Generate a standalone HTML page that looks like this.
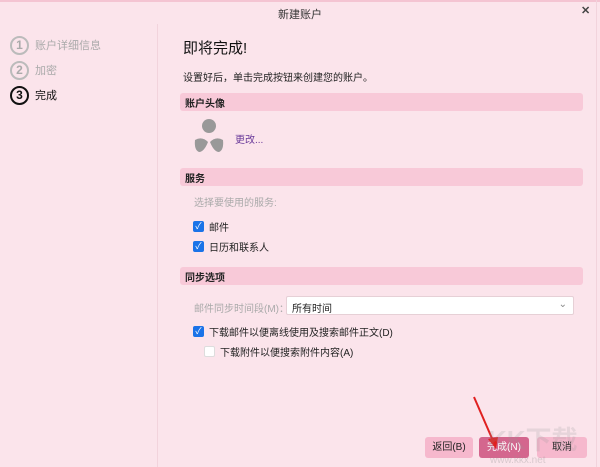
<!DOCTYPE html>
<html><head><meta charset="utf-8"><style>
*{margin:0;padding:0;box-sizing:border-box}
body{width:600px;height:467px;overflow:hidden;background:#fbe4eb;font-family:"Liberation Sans","Noto Sans CJK SC",sans-serif;font-size:10px;color:#222;position:relative}
.a{position:absolute}
.title{top:6px;left:0;width:600px;text-align:center;font-size:11px;color:#333}
.close{top:4px;left:581px;font-size:11px;color:#444;font-weight:bold}
.topline{top:0;left:0;width:600px;height:2px;background:#f4c4d2}
.divider{top:24px;left:157px;width:1px;height:443px;background:#f2d3dc}
.rdiv{top:0;left:596px;width:1px;height:467px;background:#f2d3dc}
.step{left:10px;height:20px;display:flex;align-items:center;font-size:11px;color:#aaa}
.step .c{width:19px;height:19px;border:2px solid #bbb;border-radius:50%;display:flex;align-items:center;justify-content:center;font-size:12px;font-weight:bold;color:#aaa;margin-right:6px}
.step.on{color:#111}.step.on .c{border-color:#111;color:#111}
.hdr{left:180px;width:403px;height:18px;background:#f8c9d8;border-radius:3px;font-weight:bold;font-size:10px;padding:2px 5px}
.cb{width:11px;height:11px;border-radius:2px;background:#1a73e8;color:#fff;font-size:9px;line-height:11px;text-align:center}
.row{display:flex;align-items:center;gap:5px;font-size:10px}
.btn{top:437px;height:21px;width:48px;border-radius:3px;background:#f6b8cd;font-size:10px;text-align:center;line-height:21px;color:#222}
</style></head><body>
<div class="a topline"></div>
<div class="a title">新建账户</div>
<div class="a close">✕</div>
<div class="a divider"></div>
<div class="a rdiv"></div>
<div class="a step" style="top:35px"><div class="c">1</div>账户详细信息</div>
<div class="a step" style="top:60px"><div class="c">2</div>加密</div>
<div class="a step on" style="top:85px"><div class="c">3</div>完成</div>
<div class="a" style="top:37px;left:183px;font-size:15px;color:#111">即将完成!</div>
<div class="a" style="top:69px;left:183px;font-size:10px">设置好后，单击完成按钮来创建您的账户。</div>
<div class="a hdr" style="top:93px">账户头像</div>
<svg class="a" style="top:118px;left:192px" width="36" height="36"><circle cx="17" cy="8" r="7" fill="#999"/><path d="M3 22 Q10 18 16 24 Q12 34 7 34 Q2 32 3 22Z" fill="#999"/><path d="M31 22 Q24 18 18 24 Q22 34 27 34 Q32 32 31 22Z" fill="#999"/></svg>
<div class="a" style="top:131px;left:235px;color:#6a3a9a;font-size:10px">更改...</div>
<div class="a hdr" style="top:168px">服务</div>
<div class="a" style="top:194px;left:194px;color:#aaa">选择要使用的服务:</div>
<div class="a row" style="top:219px;left:193px"><div class="cb">✓</div>邮件</div>
<div class="a row" style="top:239px;left:193px"><div class="cb">✓</div>日历和联系人</div>
<div class="a hdr" style="top:267px">同步选项</div>
<div class="a" style="top:300px;left:194px;color:#aaa">邮件同步时间段(M)：:</div>
<div class="a" style="top:296px;left:286px;width:288px;height:19px;background:#fff;border:1px solid #e6d0d6;border-radius:2px;padding:3px 5px;font-size:10px">所有时间<span style="position:absolute;right:6px;top:2px;color:#888">⌄</span></div>
<div class="a row" style="top:324px;left:193px"><div class="cb">✓</div>下载邮件以便离线使用及搜索邮件正文(D)</div>
<div class="a row" style="top:344px;left:204px"><div class="cb" style="background:#fff;border:1px solid #ddd"></div>下载附件以便搜索附件内容(A)</div>
<div class="a btn" style="left:425px">返回(B)</div>
<div class="a btn" style="left:479px;background:#d4668e;color:#fff;width:50px">完成(N)</div>
<div class="a btn" style="left:537px;width:50px">取消</div>
<svg class="a" style="top:395px;left:470px" width="30" height="60"><line x1="4" y1="2" x2="24" y2="48" stroke="#e02020" stroke-width="2"/><polygon points="18,44 28,42 26,54" fill="#e02020"/></svg>
<div class="a" style="top:420px;left:488px;font-size:26px;color:rgba(150,150,150,0.2);font-weight:bold">KK下载</div>
<div class="a" style="top:455px;left:490px;font-size:10px;color:rgba(150,150,150,0.35)">www.kkx.net</div>
</body></html>
